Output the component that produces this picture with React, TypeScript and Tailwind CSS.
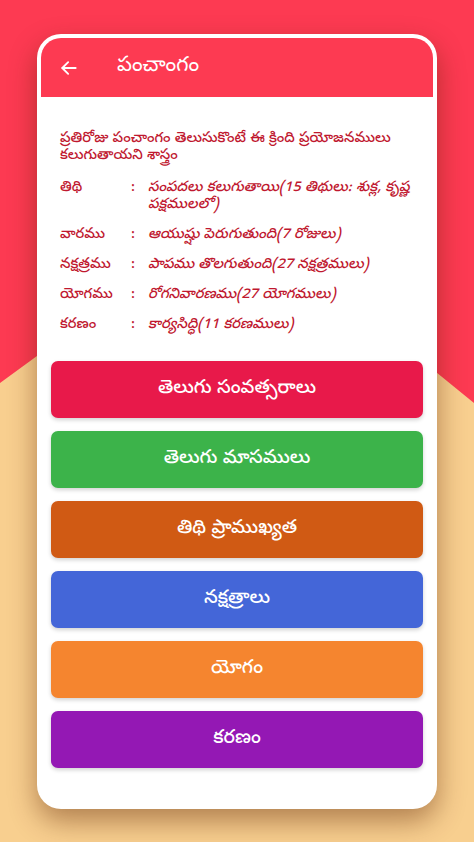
import React from 'react'

const rows: { label: string; value: string }[] = [
  { label: 'తిథి', value: 'సంపదలు కలుగుతాయి(15 తిథులు: శుక్ల, కృష్ణ పక్షములలో)' },
  { label: 'వారము', value: 'ఆయుష్షు పెరుగుతుంది(7 రోజులు)' },
  { label: 'నక్షత్రము', value: 'పాపము తొలగుతుంది(27 నక్షత్రములు)' },
  { label: 'యోగము', value: 'రోగనివారణము(27 యోగములు)' },
  { label: 'కరణం', value: 'కార్యసిద్ధి(11 కరణములు)' },
]

const buttons: { text: string; cls: string }[] = [
  { text: 'తెలుగు సంవత్సరాలు', cls: 'bg-[#e8194a]' },
  { text: 'తెలుగు మాసములు', cls: 'bg-[#3cb34a]' },
  { text: 'తిథి ప్రాముఖ్యత', cls: 'bg-[#d05a14]' },
  { text: 'నక్షత్రాలు', cls: 'bg-[#4466d8]' },
  { text: 'యోగం', cls: 'bg-[#f5852f]' },
  { text: 'కరణం', cls: 'bg-[#9418b4]' },
]

export default function App() {
  return (
    <div
      className="relative w-[474px] h-[842px] overflow-hidden bg-[#f8cf8f]"
      style={{ fontFamily: '"Noto Sans Telugu", "Noto Sans", "DejaVu Sans", sans-serif' }}
    >
      {/* background red shape */}
      <div className="absolute inset-0 bg-[#fd3a52] [clip-path:polygon(0_0,100%_0,100%_403px,50%_210px,0_383px)]" />

      <div className="relative pt-[34px] px-[37px]">
        <div className="rounded-[24px] bg-white p-[4px] shadow-[0_12px_28px_rgba(90,30,0,0.45)]">
          {/* header */}
          <div className="flex h-[59px] items-center rounded-t-[20px] bg-[#fd3a52] pl-[18px]">
            <svg width="20" height="20" viewBox="0 0 24 24" fill="none" stroke="white" strokeWidth="2.2" strokeLinecap="round" strokeLinejoin="round">
              <path d="M20 12H4" />
              <path d="M11 5l-7 7 7 7" />
            </svg>
            <span className="ml-[38px] text-[21px] text-white">పంచాంగం</span>
          </div>

          {/* body */}
          <div className="px-[19px] pt-[34px] text-[14.5px] font-medium leading-[17px] text-[#c0182f]">
            <p>ప్రతిరోజు పంచాంగం తెలుసుకొంటే ఈ క్రింది ప్రయోజనములు కలుగుతాయని శాస్త్రం</p>
            <div className="mt-[15px] flex flex-col gap-[13px]">
              {rows.map((r) => (
                <div key={r.label} className="flex items-start">
                  <div className="w-[71px] flex-none">{r.label}</div>
                  <div className="w-[17px] flex-none">:</div>
                  <div className="flex-1 italic">{r.value}</div>
                </div>
              ))}
            </div>
          </div>

          <div className="flex flex-col gap-[13px] px-[10px] pt-[27px] pb-[37px]">
            {buttons.map((b) => (
              <div
                key={b.text}
                className={`flex h-[57px] items-center justify-center rounded-[7px] text-[19px] font-medium text-white shadow-[0_2px_4px_rgba(0,0,0,0.18)] ${b.cls}`}
              >
                {b.text}
              </div>
            ))}
          </div>
        </div>
      </div>
    </div>
  )
}
